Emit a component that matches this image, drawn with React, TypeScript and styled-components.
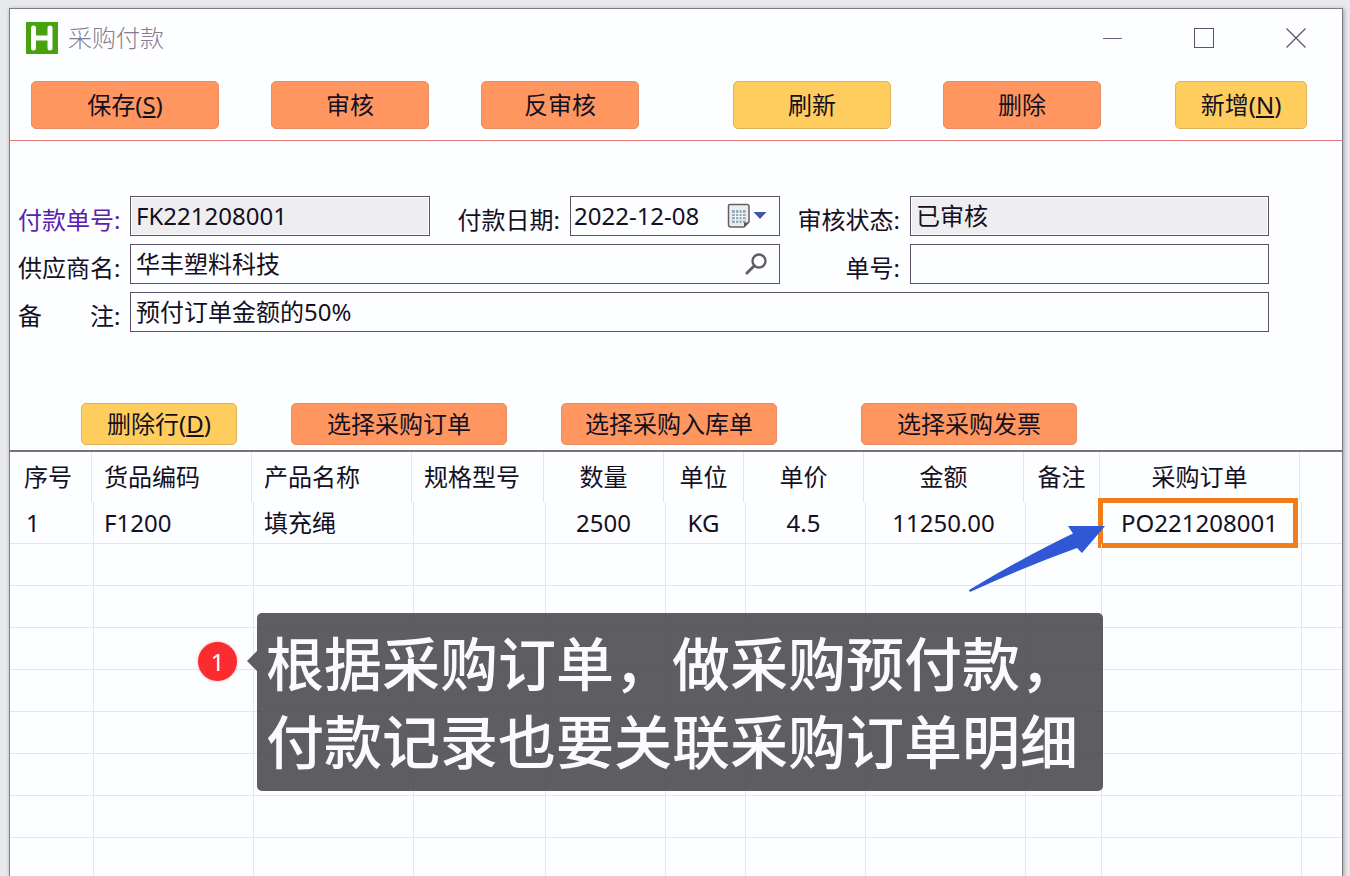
import React from 'react';
import styled, { createGlobalStyle } from 'styled-components';

const ink = '#14101f';
const line = '#5b5268';
const gridLine = '#e4e6ea';

const GlobalStyle = createGlobalStyle`
  *, *::before, *::after { box-sizing: border-box; }
  body {
    margin: 0;
    color: ${ink};
    background: #e7e9ec;
    font-family: "Noto Sans", "Noto Sans CJK SC", sans-serif;
    font-size: 24px;
    line-height: 32px;
  }
  button, input { font: inherit; color: inherit; }
`;

const Desktop = styled.div`
  display: flex;
  height: 100vh;
  padding: 8px 7px 0 9px;
  overflow: hidden;
`;

const Window = styled.main`
  flex: 1;
  min-width: 0;
  background: #fdfeff;
  border: 1px solid #7c7b84;
  border-bottom: 0;
  box-shadow: 1px 1px 4px #9a9aa2;
`;

const TitleBar = styled.header`
  display: flex;
  align-items: center;
  gap: 10px;
  height: 58px;
  padding-left: 16px;
`;

const Title = styled.h1`
  flex: 1;
  margin: 0;
  color: #857c92;
  font-size: 24px;
  font-weight: 300;
`;

const WindowControls = styled.div`
  display: flex;
  align-self: stretch;
`;

const ControlButton = styled.button`
  display: flex;
  align-items: center;
  justify-content: center;
  width: 92px;
  padding: 0;
  border: 0;
  background: none;
`;

const Toolbar = styled.nav`
  display: flex;
  gap: 74px;
  padding: 14px 35px 11px 21px;
  border-bottom: 1px solid #e4797a;
`;

const ButtonGroup = styled.div<{ $place?: 'start' | 'end' }>`
  display: flex;
  gap: 52px;
  margin-left: ${(p) => (p.$place === 'end' ? 'auto' : '0')};
  margin-right: ${(p) => (p.$place === 'start' ? '20px' : '0')};
`;

const ActionButton = styled.button<{ $tone: 'orange' | 'yellow'; $width: number; $compact?: boolean }>`
  width: ${(p) => p.$width}px;
  height: ${(p) => (p.$compact ? 42 : 48)}px;
  padding: 0;
  border: 1px solid ${(p) => (p.$tone === 'orange' ? '#e58d62' : '#dcb25c')};
  border-radius: 5px;
  background: ${(p) => (p.$tone === 'orange' ? '#ff965f' : '#ffcd5e')};
  white-space: nowrap;
  u { text-underline-offset: 2px; text-decoration-thickness: 2px; }
`;

const Form = styled.form`
  display: grid;
  grid-template-columns: 112px 300px 140px 210px 130px minmax(0, 1fr);
  grid-auto-rows: 40px;
  row-gap: 8px;
  padding: 55px 73px 71px 8px;
`;

const Label = styled.label<{ $accent?: boolean }>`
  padding: 8px 10px 0 0;
  text-align: right;
  white-space: nowrap;
  color: ${(p) => (p.$accent ? '#5a1fb0' : ink)};
`;

const Field = styled.div<{ $span?: number; $readOnly?: boolean }>`
  display: flex;
  align-items: center;
  grid-column: span ${(p) => p.$span ?? 1};
  border: 1px solid ${line};
  background: ${(p) => (p.$readOnly ? '#eeeef0' : '#fdfeff')};
  ${(p) => p.$readOnly && 'box-shadow: inset 0 0 0 1px #fdfeff;'}
`;

const TextInput = styled.input<{ $tight?: boolean }>`
  flex: 1;
  min-width: 0;
  height: 32px;
  padding: 0 0 0 ${(p) => (p.$tight ? 3 : 5)}px;
  border: 0;
  outline: 0;
  background: transparent;
`;

const FieldButton = styled.button`
  display: flex;
  align-items: center;
  padding: 0 12px 0 0;
  border: 0;
  background: none;
`;

const RowToolbar = styled.div`
  display: flex;
  gap: 54px;
  padding: 0 71px 5px;
  border-bottom: 2px solid #777080;
`;

const InvoiceSlot = styled.div`
  padding-left: 30px;
`;

const Lines = styled.section`
  position: relative;
`;

const Table = styled.table`
  width: 100%;
  table-layout: fixed;
  border-collapse: separate;
  border-spacing: 0;
`;

const HeadCell = styled.th<{ $center?: boolean }>`
  height: 50px;
  padding: ${(p) => (p.$center ? '0 5px 0 0' : '0 0 0 10px')};
  text-align: ${(p) => (p.$center ? 'center' : 'left')};
  font-weight: 400;
  white-space: nowrap;
  background: linear-gradient(${gridLine}, ${gridLine}) no-repeat right 2px top / 1px 100%;
  &:first-child { padding-left: 14px; }
  &:last-child { background: none; }
`;

const Cell = styled.td<{ $center?: boolean }>`
  position: relative;
  height: 42px;
  padding: ${(p) => (p.$center ? '0 4px 0 0' : '0 0 0 10px')};
  text-align: ${(p) => (p.$center ? 'center' : 'left')};
  white-space: nowrap;
  border-right: 1px solid ${gridLine};
  border-bottom: 1px solid ${gridLine};
  &:first-child { padding-left: 16px; }
  &:last-child { border-right: 0; }
`;

const Highlight = styled.span`
  position: absolute;
  inset: -4px 3px -5px -4px;
  border: 5px solid #f07d1a;
`;

const Pointer = styled.svg`
  position: absolute;
  left: 956px;
  top: 70px;
`;

const Callout = styled.aside`
  position: absolute;
  left: 247px;
  top: 161px;
  padding: 12px 25px 10px 9px;
  border-radius: 5px;
  background: rgba(70, 70, 72, 0.87);
  color: #fbfbff;
  font-size: 58px;
  font-weight: 500;
  line-height: 78px;
  white-space: nowrap;
  p { margin: 0; }
  &::before {
    content: "";
    position: absolute;
    left: -10px;
    top: 38px;
    border: 10px solid transparent;
    border-left: 0;
    border-right-color: rgba(70, 70, 72, 0.87);
  }
`;

const StepBadge = styled.span`
  position: absolute;
  left: 188px;
  top: 190px;
  width: 39px;
  height: 39px;
  border-radius: 50%;
  background: #fb2c30;
  box-shadow: 0 0 3px #f9a6a8;
  color: #fff;
  line-height: 39px;
  text-align: center;
`;

const columns: { title: string; width?: number; center?: boolean; value: string }[] = [
  { title: '序号', width: 84, value: '1' },
  { title: '货品编码', width: 160, value: 'F1200' },
  { title: '产品名称', width: 160, value: '填充绳' },
  { title: '规格型号', width: 132, value: '' },
  { title: '数量', width: 120, center: true, value: '2500' },
  { title: '单位', width: 80, center: true, value: 'KG' },
  { title: '单价', width: 120, center: true, value: '4.5' },
  { title: '金额', width: 160, center: true, value: '11250.00' },
  { title: '备注', width: 76, center: true, value: '' },
  { title: '采购订单', width: 200, center: true, value: 'PO221208001' },
  { title: '', value: '' },
];

const emptyRows = Array.from({ length: 8 }, (_, i) => i);

const AppLogo = () => (
  <svg width="32" height="32" viewBox="0 0 32 32" aria-hidden="true">
    <rect width="32" height="32" fill="#48a20f" />
    <path d="M7.500 6v20M24 6v20M8 16h16" stroke="#fff" strokeWidth="5" strokeLinecap="round" />
  </svg>
);

const CalendarIcon = () => (
  <svg width="40" height="26" viewBox="0 0 40 26" aria-hidden="true">
    <path d="M3 1.500h17q2 0 2 2V19l-5 5H4q-2.500 0-2.500-2.500V3q0-1.500 1.500-1.500z" fill="#eeebea" stroke="#655d63" strokeWidth="1.500" />
    <rect x="5" y="7" width="13.500" height="13" fill="#92a9bd" />
    <path d="M5 10.500h13.500M5 13.500h13.500M5 16.800h13.500M8.500 7v13M12 7v13M15.300 7v13" stroke="#f3f5f8" strokeWidth="1.200" />
    <path d="M17 24v-4.500h5z" fill="#5d555c" />
    <path d="M26.500 9h13l-6.500 7z" fill="#3e5a9c" />
  </svg>
);

const SearchIcon = () => (
  <svg width="22" height="22" viewBox="0 0 22 22" fill="none" stroke="#655d66" aria-hidden="true">
    <circle cx="14" cy="8" r="6.500" strokeWidth="2.400" />
    <path d="M9.300 12.700L2 20" strokeWidth="3" strokeLinecap="round" />
  </svg>
);

export default function App() {
  return (
    <>
      <GlobalStyle />
      <Desktop>
        <Window>
          <TitleBar>
            <AppLogo />
            <Title>采购付款</Title>
            <WindowControls>
              <ControlButton aria-label="最小化">
                <svg width="20" height="20" fill="none" stroke="#6c6478"><path d="M1 10.500h19" /></svg>
              </ControlButton>
              <ControlButton aria-label="最大化">
                <svg width="20" height="20" fill="none" stroke="#5c526c"><rect x="0.500" y="0.500" width="19" height="19" /></svg>
              </ControlButton>
              <ControlButton aria-label="关闭">
                <svg width="20" height="20" fill="none" stroke="#5c526c" strokeWidth="1.200"><path d="M0.500 0.500l19 19M19.500 0.500l-19 19" /></svg>
              </ControlButton>
            </WindowControls>
          </TitleBar>

          <Toolbar>
            <ButtonGroup $place="start">
              <ActionButton $tone="orange" $width={188}>保存(<u>S</u>)</ActionButton>
              <ActionButton $tone="orange" $width={158}>审核</ActionButton>
              <ActionButton $tone="orange" $width={158}>反审核</ActionButton>
            </ButtonGroup>
            <ButtonGroup>
              <ActionButton $tone="yellow" $width={158}>刷新</ActionButton>
              <ActionButton $tone="orange" $width={158}>删除</ActionButton>
            </ButtonGroup>
            <ButtonGroup $place="end">
              <ActionButton $tone="yellow" $width={132}>新增(<u>N</u>)</ActionButton>
            </ButtonGroup>
          </Toolbar>

          <Form onSubmit={(e) => e.preventDefault()}>
            <Label htmlFor="payNo" $accent>付款单号:</Label>
            <Field $readOnly><TextInput id="payNo" readOnly defaultValue="FK221208001" /></Field>
            <Label htmlFor="payDate">付款日期:</Label>
            <Field>
              <TextInput id="payDate" $tight defaultValue="2022-12-08" />
              <FieldButton type="button" aria-label="选择日期"><CalendarIcon /></FieldButton>
            </Field>
            <Label htmlFor="status">审核状态:</Label>
            <Field $readOnly><TextInput id="status" readOnly defaultValue="已审核" /></Field>

            <Label htmlFor="supplier">供应商名:</Label>
            <Field $span={3}>
              <TextInput id="supplier" defaultValue="华丰塑料科技" />
              <FieldButton type="button" aria-label="查找供应商"><SearchIcon /></FieldButton>
            </Field>
            <Label htmlFor="billNo">单号:</Label>
            <Field><TextInput id="billNo" /></Field>

            <Label htmlFor="remark">备　　注:</Label>
            <Field $span={5}><TextInput id="remark" defaultValue="预付订单金额的50%" /></Field>
          </Form>

          <RowToolbar>
            <ActionButton $compact $tone="yellow" $width={156}>删除行(<u>D</u>)</ActionButton>
            <ActionButton $compact $tone="orange" $width={216}>选择采购订单</ActionButton>
            <ActionButton $compact $tone="orange" $width={216}>选择采购入库单</ActionButton>
            <InvoiceSlot>
              <ActionButton $compact $tone="orange" $width={216}>选择采购发票</ActionButton>
            </InvoiceSlot>
          </RowToolbar>

          <Lines>
            <Table>
              <colgroup>
                {columns.map((c) => <col key={c.title} width={c.width} />)}
              </colgroup>
              <thead>
                <tr>
                  {columns.map((c) => <HeadCell key={c.title} $center={c.center}>{c.title}</HeadCell>)}
                </tr>
              </thead>
              <tbody>
                <tr>
                  {columns.map((c) => (
                    <Cell key={c.title} $center={c.center}>
                      {c.value}
                      {c.title === '采购订单' && <Highlight />}
                    </Cell>
                  ))}
                </tr>
                {emptyRows.map((r) => (
                  <tr key={r}>{columns.map((c) => <Cell key={c.title} />)}</tr>
                ))}
              </tbody>
            </Table>

            <Pointer width="142" height="74" viewBox="0 0 142 74" aria-hidden="true">
              <path d="M139 4L102 4L107 11.500Q58 35 3 68L4 70Q58 45 111 26L116 31Z" fill="#2f57d6" />
            </Pointer>
            <StepBadge>1</StepBadge>
            <Callout>
              <p>根据采购订单，做采购预付款，</p>
              <p>付款记录也要关联采购订单明细</p>
            </Callout>
          </Lines>
        </Window>
      </Desktop>
    </>
  );
}
